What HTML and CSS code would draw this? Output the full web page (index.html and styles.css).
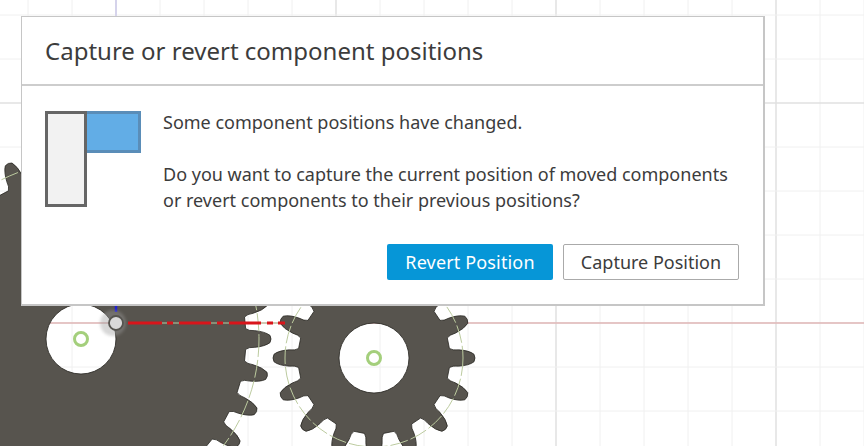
FILE: index.html
```html
<!DOCTYPE html>
<html lang="en">
<head>
    <meta charset="UTF-8">
    <title>Capture or revert component positions</title>
    <link rel="stylesheet" href="styles.css">
</head>
<body>
    <svg class="canvas" id="canvas" width="864" height="446" viewBox="0 0 864 446">
        <g id="grid"></g>
        <line class="axis-x" x1="0" y1="323" x2="864" y2="323"/>
        <line class="axis-y" x1="116" y1="0" x2="116" y2="323"/>
        <path class="gear" id="gearBig" d=""/>
        <path class="gear" id="gearSmall" d=""/>
        <circle class="pitch" cx="81" cy="339" r="178"/>
        <circle class="pitch" cx="374" cy="358" r="89"/>
        <circle class="center-ring" cx="81" cy="339" r="6.5"/>
        <circle class="center-ring" cx="374" cy="358" r="6.5"/>
        <line class="joint-pitch" x1="128" y1="323" x2="285" y2="323"/>
        <path class="joint-line" d="M128 323H162M167 323H173M179 323H211M217 323H223M229 323H261M267 323H273M278 323H285"/>
        <line class="joint-blue" x1="116" y1="305" x2="116" y2="312"/>
        <circle class="joint-halo" cx="113" cy="323" r="13"/>
        <circle class="joint" cx="116" cy="323" r="7"/>
    </svg>

    <div class="dialog">
        <div class="dialog-header">
            <h1>Capture or revert component positions</h1>
        </div>
        <div class="dialog-body">
            <div class="dialog-main">
                <svg class="dialog-icon" width="96" height="96" viewBox="0 0 96 96">
                    <rect class="icon-blue" x="38.500" y="1.500" width="56" height="39"/>
                    <rect class="icon-gray" x="1.500" y="1.500" width="39" height="93"/>
                </svg>
                <div class="dialog-text">
                    <p>Some component positions have changed.</p>
                    <p>Do you want to capture the current position of moved components<br>or revert components to their previous positions?</p>
                </div>
            </div>
            <div class="dialog-buttons">
                <button class="button button-primary">Revert Position</button>
                <button class="button button-secondary">Capture Position</button>
            </div>
        </div>
    </div>

    <script src="script.js"></script>
</body>
</html>
```

FILE: styles.css
```css
* {
    margin: 0;
    padding: 0;
    box-sizing: border-box;
}
body {
    position: relative;
    width: 864px;
    height: 446px;
    overflow: hidden;
    background-color: #fff;
    font-family: "Noto Sans", Arial, sans-serif;
    color: #3c3c3c;
}
.canvas {
    position: absolute;
    left: 0;
    top: 0;
}
.grid-line {
    stroke: #f0f0f0;
    stroke-width: 1;
}
.grid-major {
    stroke: #e0e0e0;
    stroke-width: 1.5;
}
.axis-x {
    stroke: #e2a3a3;
    stroke-width: 1;
}
.axis-y {
    stroke: #cfcdec;
    stroke-width: 1.5;
}
.gear {
    fill: #57544e;
    fill-rule: evenodd;
    stroke: #26251f;
    stroke-width: 0.8;
}
.pitch {
    fill: none;
    stroke: #bccb9f;
    stroke-width: 1;
    stroke-dasharray: 18 3;
}
.center-ring {
    fill: none;
    stroke: #a4cf7c;
    stroke-width: 3;
}
.joint-pitch {
    stroke: #bccb9f;
    stroke-width: 1;
}
.joint-line {
    fill: none;
    stroke: #d9151b;
    stroke-width: 3;
}
.joint-blue {
    stroke: #2020cf;
    stroke-width: 2.5;
}
.joint-halo {
    fill: #9c9c9c;
    opacity: 0.4;
    filter: blur(1.5px);
}
.joint {
    fill: #d9d9d9;
    stroke: #55544f;
    stroke-width: 1.8;
}
.dialog {
    position: absolute;
    left: 21px;
    top: 16px;
    width: 744px;
    height: 290px;
    background-color: #fff;
    border: 1px solid #c6c6c6;
    border-right-width: 2px;
    border-bottom-width: 2px;
}
.dialog-header {
    height: 69px;
    padding: 0 23px;
    display: flex;
    align-items: center;
    border-bottom: 2px solid #cdcdcd;
}
.dialog-header h1 {
    font-size: 24px;
    font-weight: 400;
    line-height: 32px;
}
.dialog-body {
    padding: 25px 24px 0 23px;
}
.dialog-main {
    display: flex;
    gap: 22px;
}
.dialog-icon {
    flex: none;
}
.icon-gray {
    fill: #f2f2f2;
    stroke: #666;
    stroke-width: 3;
}
.icon-blue {
    fill: #62ade6;
    stroke: #5a8db8;
    stroke-width: 3;
}
.dialog-text {
    font-size: 18px;
    line-height: 26px;
    margin-top: -2px;
}
.dialog-text p + p {
    margin-top: 26px;
}
.dialog-buttons {
    display: flex;
    justify-content: flex-end;
    gap: 10px;
    margin-top: 31px;
}
.button {
    height: 36px;
    border-radius: 2px;
    font-family: inherit;
    font-size: 18px;
    cursor: pointer;
}
.button-primary {
    width: 166px;
    border: none;
    background-color: #0696d7;
    color: #fff;
    letter-spacing: 0.15px;
}
.button-secondary {
    width: 176px;
    border: 1px solid #aaa;
    background-color: #fff;
    color: #3c3c3c;
}
```

FILE: script.js
```js
// grid lines, every 5th one is darker
const grid = document.getElementById('grid');

function addLine(x1, y1, x2, y2, major) {
    const line = document.createElementNS('http://www.w3.org/2000/svg', 'line');
    line.setAttribute('x1', x1);
    line.setAttribute('y1', y1);
    line.setAttribute('x2', x2);
    line.setAttribute('y2', y2);
    line.setAttribute('class', major ? 'grid-line grid-major' : 'grid-line');
    grid.appendChild(line);
}

for (let i = 0; i < 20; i++) {
    const x = 28 + i * 44;
    addLine(x, 0, x, 446, (x - 116) % 220 === 0);
}
for (let i = 0; i < 10; i++) {
    const y = 15 + i * 44;
    addLine(0, y, 864, y, (y - 103) % 220 === 0);
}

function polar(cx, cy, r, deg) {
    const a = deg * Math.PI / 180;
    return (cx + r * Math.cos(a)).toFixed(2) + ' ' + (cy + r * Math.sin(a)).toFixed(2);
}

// one outline with a hole for the bore
function gearPath(cx, cy, teeth, pitchR, boreR) {
    const step = 360 / teeth;
    const scale = 16 / teeth;
    const rootR = pitchR - 13;
    const midR = pitchR - 4;
    const tipR = pitchR + 12;
    let d = '';
    for (let i = 0; i < teeth; i++) {
        const a = i * step;
        const start = polar(cx, cy, rootR, a - 7.2 * scale);
        d += (i === 0 ? 'M' : 'L') + start;
        d += 'Q' + polar(cx, cy, rootR + 3, a - 5.4 * scale) + ' ' + polar(cx, cy, midR, a - 5.5 * scale);
        d += 'Q' + polar(cx, cy, tipR - 6, a - 4.6 * scale) + ' ' + polar(cx, cy, tipR - 1, a - 2.2 * scale);
        d += 'Q' + polar(cx, cy, tipR + 1, a) + ' ' + polar(cx, cy, tipR - 1, a + 2.2 * scale);
        d += 'Q' + polar(cx, cy, tipR - 6, a + 4.6 * scale) + ' ' + polar(cx, cy, midR, a + 5.5 * scale);
        d += 'Q' + polar(cx, cy, rootR + 3, a + 5.4 * scale) + ' ' + polar(cx, cy, rootR, a + 7.2 * scale);
    }
    d += 'Z';
    d += 'M' + (cx - boreR) + ' ' + cy;
    d += 'A' + boreR + ' ' + boreR + ' 0 1 0 ' + (cx + boreR) + ' ' + cy;
    d += 'A' + boreR + ' ' + boreR + ' 0 1 0 ' + (cx - boreR) + ' ' + cy + 'Z';
    return d;
}

document.getElementById('gearBig').setAttribute('d', gearPath(81, 339, 32, 178, 35));
document.getElementById('gearSmall').setAttribute('d', gearPath(374, 358, 16, 89, 35));
```
